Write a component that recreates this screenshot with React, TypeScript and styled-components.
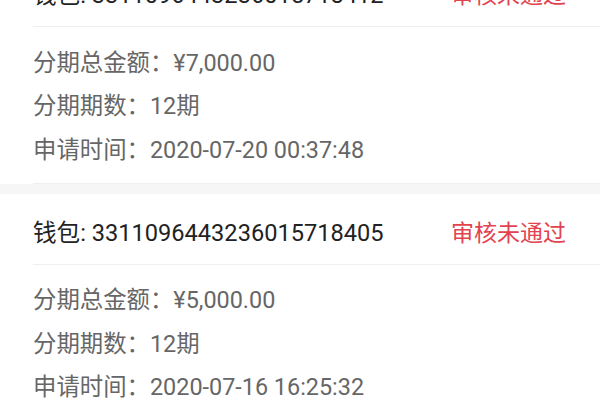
import React from "react";
import styled, { createGlobalStyle } from "styled-components";

const GlobalStyle = createGlobalStyle`
  html, body {
    margin: 0;
    padding: 0;
    background: #ffffff;
    overflow: hidden;
  }
  body {
    font-family: Roboto, "Noto Sans CJK SC", sans-serif;
  }
`;

const List = styled.div`
  display: flex;
  flex-direction: column;
  gap: 10px;
  margin-top: -44px;
  background: #f6f6f6;
`;

const Card = styled.div`
  background: #ffffff;
  padding-left: 33px;
`;

const Header = styled.div`
  height: 71px;
  display: flex;
  align-items: center;
  justify-content: space-between;
  padding-right: 34px;
  padding-top: 4px;
  border-bottom: 1px solid #efefef;
  box-sizing: border-box;
`;

const Wallet = styled.span`
  font-size: 23.6px;
  color: #222222;
`;

const Status = styled.span`
  font-size: 23px;
  color: #e2434f;
`;

const Body = styled.div`
  padding: 12px 0 13px;
  border-bottom: 1px solid #efefef;
`;

const Row = styled.div`
  height: 43.5px;
  display: flex;
  align-items: center;
  font-size: 23.4px;
  color: #666666;
`;

interface Item {
  wallet: string;
  amount: string;
  periods: string;
  time: string;
}

const items: Item[] = [
  {
    wallet: "3311096443236015718412",
    amount: "¥7,000.00",
    periods: "12期",
    time: "2020-07-20 00:37:48",
  },
  {
    wallet: "3311096443236015718405",
    amount: "¥5,000.00",
    periods: "12期",
    time: "2020-07-16 16:25:32",
  },
];

const App: React.FC = () => (
  <>
    <GlobalStyle />
    <List>
      {items.map((item) => (
        <Card key={item.wallet}>
          <Header>
            <Wallet>钱包: {item.wallet}</Wallet>
            <Status>审核未通过</Status>
          </Header>
          <Body>
            <Row>分期总金额：{item.amount}</Row>
            <Row>分期期数：{item.periods}</Row>
            <Row>申请时间：{item.time}</Row>
          </Body>
        </Card>
      ))}
    </List>
  </>
);

export default App;
